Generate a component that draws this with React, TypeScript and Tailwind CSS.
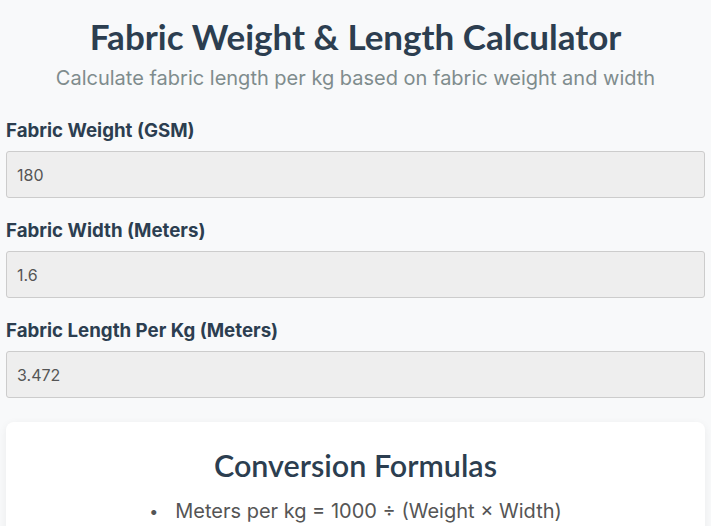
import React from "react";

const fields = [
  { label: "Fabric Weight (GSM)", value: "180" },
  { label: "Fabric Width (Meters)", value: "1.6" },
  { label: "Fabric Length Per Kg (Meters)", value: "3.472" },
];

export default function App() {
  return (
    <div className="min-h-[526px] bg-[#f8f9fa] px-[6px] pt-[13px] font-['Inter',sans-serif]">
      <h1 className="text-center text-[35px] font-bold leading-[46px] text-[#2c3e50] font-['Lato',sans-serif]">
        Fabric Weight &amp; Length Calculator
      </h1>
      <p className="mt-[6px] text-center text-[20px] leading-[26px] text-[#7f8c8d]">
        Calculate fabric length per kg based on fabric weight and width
      </p>
      <div className="mt-[28px] flex flex-col gap-[21px]">
        {fields.map((f) => (
          <div key={f.label} className="flex flex-col">
            <label className="text-[18.7px] font-bold leading-[24px] text-[#2c3e50]">{f.label}</label>
            <div className="mt-[8px] flex h-[47px] items-center rounded-[3px] border border-[#cccccc] bg-[#eeeeee] px-[10px] text-[16px] text-[#555555]">
              {f.value}
            </div>
          </div>
        ))}
      </div>
      <div className="mt-[24px] rounded-[8px] bg-white pb-[20px] pt-[25px] shadow-[0_2px_8px_rgba(0,0,0,0.06)]">
        <h2 className="text-center text-[30.5px] font-semibold leading-[36px] text-[#2c3e50] font-['Lato',sans-serif]">
          Conversion Formulas
        </h2>
        <ul className="mt-[14px] flex flex-col items-center">
          <li className="flex items-center gap-[17px] text-[20px] leading-[28px] text-[#555]">
            <span className="text-[16px]">•</span>
            <span>Meters per kg = 1000 ÷ (Weight × Width)</span>
          </li>
        </ul>
      </div>
    </div>
  );
}
